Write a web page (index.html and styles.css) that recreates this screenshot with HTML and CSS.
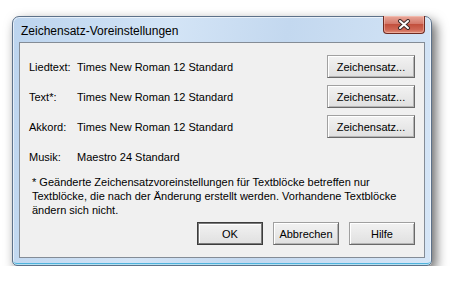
FILE: index.html
```html
<!DOCTYPE html>
<html lang="de">
<head>
    <meta charset="UTF-8">
    <meta name="viewport" content="width=device-width, initial-scale=1.0">
    <title>Zeichensatz-Voreinstellungen</title>
    <link rel="stylesheet" href="styles.css">
</head>
<body>

    <div class="window">
        <div class="titlebar">
            <span class="title">Zeichensatz-Voreinstellungen</span>
            <button class="close" aria-label="Schließen">
                <svg width="14" height="11" viewBox="0 0 14 11">
                    <path d="M3 2 L11 9 M11 2 L3 9" stroke="#3b2a2a" stroke-width="4" stroke-linecap="round"/>
                    <path d="M3 2 L11 9 M11 2 L3 9" stroke="#ffffff" stroke-width="2" stroke-linecap="round"/>
                </svg>
            </button>
        </div>

        <div class="client">
            <div class="row">
                <span class="label">Liedtext:</span>
                <span class="value">Times New Roman 12 Standard</span>
                <button class="btn btn-font">Zeichensatz...</button>
            </div>
            <div class="row">
                <span class="label">Text*:</span>
                <span class="value">Times New Roman 12 Standard</span>
                <button class="btn btn-font">Zeichensatz...</button>
            </div>
            <div class="row">
                <span class="label">Akkord:</span>
                <span class="value">Times New Roman 12 Standard</span>
                <button class="btn btn-font">Zeichensatz...</button>
            </div>
            <div class="row">
                <span class="label">Musik:</span>
                <span class="value">Maestro 24 Standard</span>
            </div>

            <p class="note">
                * Geänderte Zeichensatzvoreinstellungen für Textblöcke betreffen nur<br>
                Textblöcke, die nach der Änderung erstellt werden. Vorhandene Textblöcke<br>
                ändern sich nicht.
            </p>

            <div class="actions">
                <button class="btn btn-action btn-default">OK</button>
                <button class="btn btn-action">Abbrechen</button>
                <button class="btn btn-action">Hilfe</button>
            </div>
        </div>
    </div>

</body>
</html>
```

FILE: styles.css
```css
body {
    margin: 0;
    padding: 16px 0 0 12px;
    background: #ffffff;
    font-family: 'Liberation Sans', Arial, sans-serif;
    font-size: 11px;
    color: #000;
}
.window {
    box-sizing: border-box;
    width: 420px;
    height: 250px;
    padding: 0 6px 7px 6px;
    border: 1px solid #5d7189;
    border-radius: 7px 7px 5px 5px;
    background: linear-gradient(100deg, #bcd4ee 0%, #d3e4f6 35%, #c3d8ef 60%, #d6e6f7 100%);
    box-shadow: 4px 5px 12px rgba(0, 0, 0, 0.6), inset 0 0 0 1px rgba(255, 255, 255, 0.6), inset 0 -2px 0 #4fb3dd;
}
.titlebar {
    height: 25px;
    display: flex;
    justify-content: space-between;
    align-items: flex-start;
}
.title {
    font-size: 12px;
    line-height: 14px;
    margin: 7px 0 0 2px;
    color: #000;
}
.close {
    width: 42px;
    height: 18px;
    margin: -1px 0 0 0;
    padding: 0;
    border: 1px solid #6e2b22;
    border-top: none;
    border-radius: 0 0 4px 4px;
    background: linear-gradient(#e9a99b 0%, #d4786a 45%, #c2503d 50%, #cf6654 80%, #e0907c 100%);
    box-shadow: inset 0 0 0 1px rgba(255, 210, 200, 0.45);
    display: flex;
    align-items: center;
    justify-content: center;
}
.close svg {
    display: block;
}
.client {
    box-sizing: border-box;
    height: 216px;
    border: 1px solid #848c96;
    background: #f0f0f0;
    padding: 12px 9px 0 9px;
}
.row {
    height: 23px;
    margin-bottom: 7px;
    display: flex;
    align-items: center;
}
.label {
    width: 48px;
}
.value {
    flex: 1;
}
.btn {
    box-sizing: border-box;
    height: 23px;
    padding: 0;
    font-family: inherit;
    font-size: 11px;
    color: #000;
    border: 1px solid #a0a0a0;
    border-right-color: #696969;
    border-bottom-color: #696969;
    border-radius: 0;
    background: linear-gradient(#f2f2f2, #e0e0e0);
    box-shadow: inset 1px 1px 0 #ffffff, inset -1px -1px 0 #b4b4b4;
}
.btn-font {
    width: 88px;
}
.note {
    margin: 1px 0 0 3px;
    line-height: 14px;
}
.actions {
    margin-top: 5px;
    display: flex;
    justify-content: flex-end;
    gap: 10px;
}
.btn-action {
    width: 66px;
}
.btn-default {
    border: 1px solid #3c3c3c;
    box-shadow: inset 0 0 0 1px #7a7a7a, inset 2px 2px 0 #ffffff;
}
```
